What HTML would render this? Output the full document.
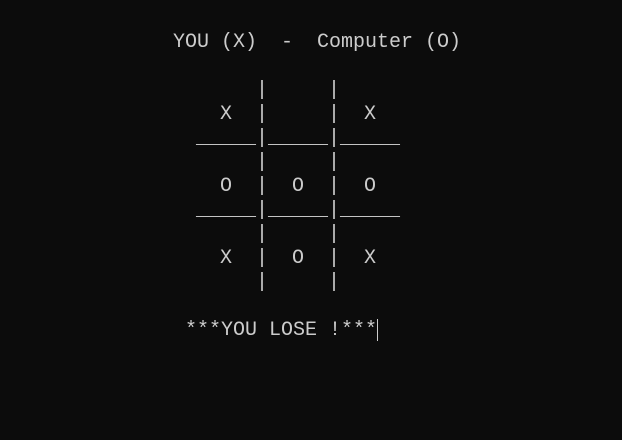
<!DOCTYPE html>
<html><head><meta charset="utf-8"><style>
html,body{margin:0;padding:0;background:#0c0c0c;width:622px;height:440px;overflow:hidden}
.l{position:absolute;white-space:pre;font-family:"Liberation Mono",monospace;font-size:20px;line-height:24px;height:24px;color:#cccccc}
.cur{position:absolute;left:377px;top:319px;width:1px;height:22px;background:#cccccc}
</style></head><body>
<div class="l" style="left:173px;top:31px">YOU (X)  -  Computer (O)</div>
<div class="l" style="left:196px;top:79px">     |     |</div>
<div class="l" style="left:196px;top:103px">  X  |     |  X</div>
<div class="l" style="left:196px;top:127px">_____|_____|_____</div>
<div class="l" style="left:196px;top:151px">     |     |</div>
<div class="l" style="left:196px;top:175px">  O  |  O  |  O</div>
<div class="l" style="left:196px;top:199px">_____|_____|_____</div>
<div class="l" style="left:196px;top:223px">     |     |</div>
<div class="l" style="left:196px;top:247px">  X  |  O  |  X</div>
<div class="l" style="left:196px;top:271px">     |     |</div>
<div class="l" style="left:185px;top:319px">***YOU LOSE !***</div>
<div class="cur"></div>
</body></html>
